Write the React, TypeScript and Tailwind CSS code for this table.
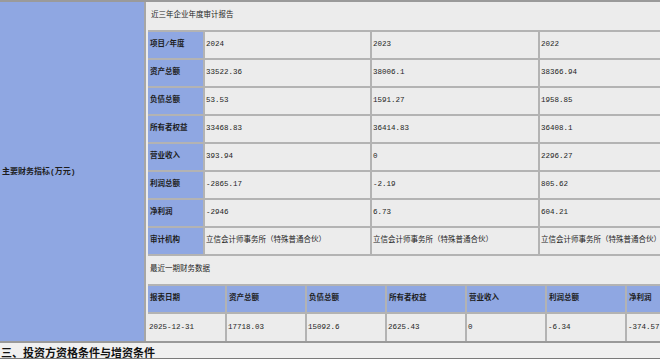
const years = ["2024", "2023", "2022"];

const rows: { label: string; values: string[] }[] = [
  { label: "项目/年度", values: years },
  { label: "资产总额", values: ["33522.36", "38006.1", "38366.94"] },
  { label: "负债总额", values: ["53.53", "1591.27", "1958.85"] },
  { label: "所有者权益", values: ["33468.83", "36414.83", "36408.1"] },
  { label: "营业收入", values: ["393.94", "0", "2296.27"] },
  { label: "利润总额", values: ["-2865.17", "-2.19", "805.62"] },
  { label: "净利润", values: ["-2946", "6.73", "604.21"] },
  {
    label: "审计机构",
    values: [
      "立信会计师事务所（特殊普通合伙）",
      "立信会计师事务所（特殊普通合伙）",
      "立信会计师事务所（特殊普通合伙）",
    ],
  },
];

const latestHead = ["报表日期", "资产总额", "负债总额", "所有者权益", "营业收入", "利润总额", "净利润"];
const latestData = ["2025-12-31", "17718.03", "15092.6", "2625.43", "0", "-6.34", "-374.57"];

// widths of the three year columns (border-box, so border included)
const yearW = ["w-[167px]", "w-[168px]", "w-[168px]"];
const latestW = ["w-[79px]", "w-[80px]", "w-[80px]", "w-[80px]", "w-[80px]", "w-[80px]", "w-[80px]"];

export default function App() {
  return (
    <div
      className="w-[660px] h-[359px] overflow-hidden bg-[#ececec] text-[#1e1e1e] text-[7.5px] leading-none"
      style={{ fontFamily: '"Liberation Mono", "Noto Sans CJK SC", monospace' }}
    >
      <div className="flex border-t-2 border-b-2 border-[#9a9a9a]">
        {/* left label column */}
        <div className="w-[146px] shrink-0 bg-[#8fa7e2] flex items-center pl-[2px] border-r-2 border-[#a6a6a6] font-bold text-[8px]">
          主要财务指标(万元)
        </div>

        <div className="flex-1 min-w-0">
          <div className="h-[28px] flex items-center pl-[5px]">近三年企业年度审计报告</div>

          {/* yearly audit table */}
          <div className="ml-[2px] border-t-2 border-[#b3b3b3] w-max">
            {rows.map((r) => (
              <div key={r.label} className="flex h-[28px] border-b-2 border-[#b3b3b3]">
                <div className="w-[57px] shrink-0 bg-[#8fa7e2] flex items-center pl-[2px] font-bold border-r-2 border-[#b3b3b3]">
                  {r.label}
                </div>
                {r.values.map((v, i) => (
                  <div
                    key={i}
                    className={`${yearW[i]} shrink-0 flex items-center pl-[1px] border-r-2 border-[#b3b3b3] whitespace-nowrap overflow-hidden`}
                  >
                    {v}
                  </div>
                ))}
              </div>
            ))}
          </div>

          <div className="h-[28px] flex items-center pl-[4px]">最近一期财务数据</div>

          {/* latest period table */}
          <div className="ml-[2px] border-t-2 border-[#b3b3b3] w-max">
            <div className="flex h-[28px] border-b-2 border-[#b3b3b3]">
              {latestHead.map((h, i) => (
                <div
                  key={h}
                  className={`${latestW[i]} shrink-0 bg-[#8fa7e2] flex items-center pl-[2px] font-bold border-r-2 border-[#b3b3b3]`}
                >
                  {h}
                </div>
              ))}
            </div>
            <div className="flex h-[27px]">
              {latestData.map((d, i) => (
                <div
                  key={i}
                  className={`${latestW[i]} shrink-0 flex items-center pl-[1px] border-r-2 border-[#b3b3b3]`}
                >
                  {d}
                </div>
              ))}
            </div>
          </div>
        </div>
      </div>

      <div
        className="h-[17px] flex items-end bg-[#f0f0f0] border-b-2 border-[#7a7a7a] text-[11px] font-bold text-[#111] pl-[1px]"
        style={{ fontFamily: '"Noto Sans CJK SC", serif' }}
      >
        三、投资方资格条件与增资条件
      </div>
    </div>
  );
}
